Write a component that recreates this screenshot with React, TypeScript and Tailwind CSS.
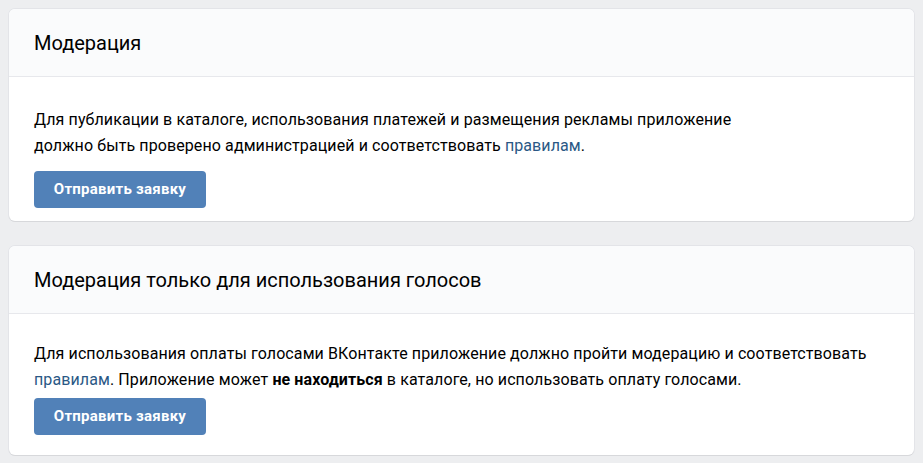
import React from "react";

function Card({
  title,
  children,
  bodyClass,
}: {
  title: string;
  children: React.ReactNode;
  bodyClass: string;
}) {
  return (
    <div className="bg-white rounded-[6px] shadow-[0_1px_0_0_#d7d8db,0_0_0_1px_#e3e4e8] overflow-hidden">
      <div className="h-[68px] bg-[#fafbfc] border-b border-[#e7e8ec] flex items-center px-[25px]">
        <h2 className="text-[20px] text-[#000] leading-[24px]">{title}</h2>
      </div>
      <div className={bodyClass}>{children}</div>
    </div>
  );
}

function Btn({ mt }: { mt: string }) {
  return (
    <button
      className={`${mt} h-[37px] w-[172px] rounded-[4px] bg-[#5181b8] text-white text-[15px] font-bold tracking-[0.25px]`}
    >
      Отправить заявку
    </button>
  );
}

export default function App() {
  return (
    <div
      className="min-h-[463px] bg-[#edeef0] px-[9px] pt-[9px] pb-[8px] flex flex-col gap-[25px]"
      style={{ fontFamily: "Roboto, 'Open Sans', Arial, sans-serif" }}
    >
      <Card title="Модерация" bodyClass="px-[25px] pt-[30px] pb-[13px]">
        <p className="text-[16px] tracking-[0.1px] leading-[26px] text-[#000]">
          Для публикации в каталоге, использования платежей и размещения рекламы приложение
          <br />
          должно быть проверено администрацией и соответствовать{" "}
          <a className="text-[#2a5885]">правилам</a>.
        </p>
        <Btn mt="mt-[12px]" />
      </Card>
      <Card title="Модерация только для использования голосов" bodyClass="px-[25px] pt-[27px] pb-[20px]">
        <p className="text-[16px] tracking-[0.1px] leading-[26px] text-[#000]">
          Для использования оплаты голосами ВКонтакте приложение должно пройти модерацию и соответствовать
          <br />
          <a className="text-[#2a5885]">правилам</a>. Приложение может <b>не находиться</b> в каталоге, но использовать оплату голосами.
        </p>
        <Btn mt="mt-[5px]" />
      </Card>
    </div>
  );
}
